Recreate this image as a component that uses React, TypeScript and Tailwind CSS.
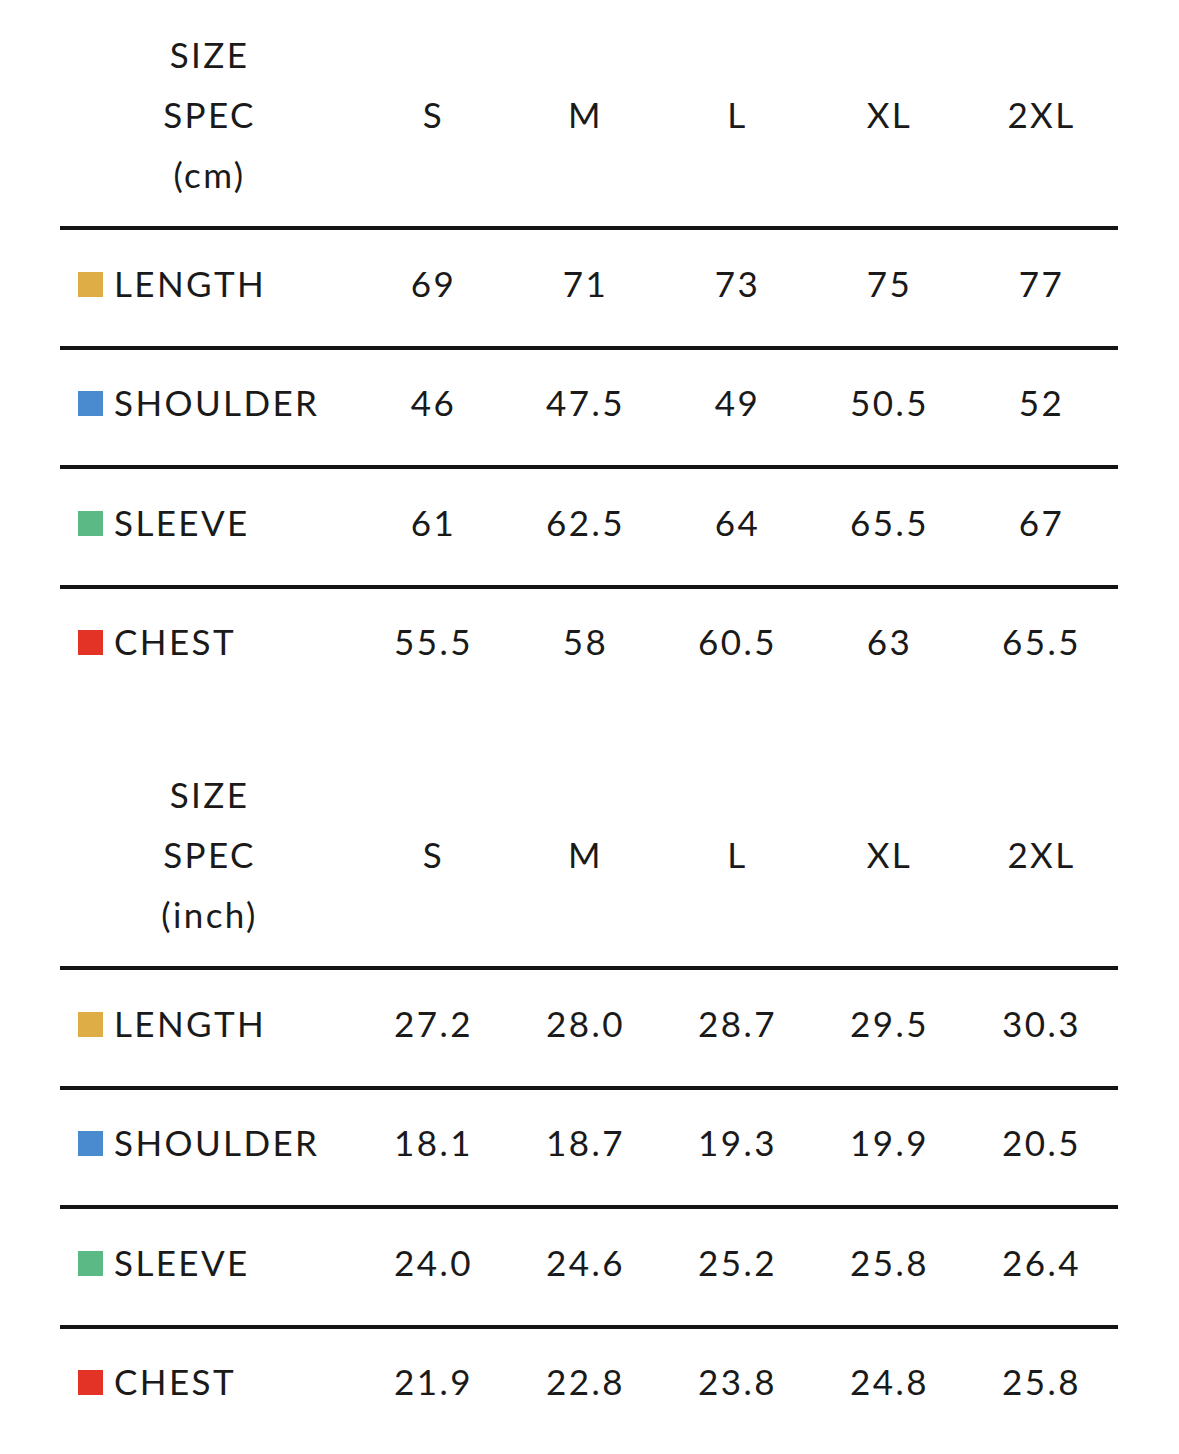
const sizes = ["S", "M", "L", "XL", "2XL"];

type Row = { label: string; color: string; values: string[] };

const cmRows: Row[] = [
  { label: "LENGTH", color: "bg-[#dfad46]", values: ["69", "71", "73", "75", "77"] },
  { label: "SHOULDER", color: "bg-[#4a8acf]", values: ["46", "47.5", "49", "50.5", "52"] },
  { label: "SLEEVE", color: "bg-[#5bb985]", values: ["61", "62.5", "64", "65.5", "67"] },
  { label: "CHEST", color: "bg-[#e33327]", values: ["55.5", "58", "60.5", "63", "65.5"] },
];

const inchRows: Row[] = [
  { label: "LENGTH", color: "bg-[#dfad46]", values: ["27.2", "28.0", "28.7", "29.5", "30.3"] },
  { label: "SHOULDER", color: "bg-[#4a8acf]", values: ["18.1", "18.7", "19.3", "19.9", "20.5"] },
  { label: "SLEEVE", color: "bg-[#5bb985]", values: ["24.0", "24.6", "25.2", "25.8", "26.4"] },
  { label: "CHEST", color: "bg-[#e33327]", values: ["21.9", "22.8", "23.8", "24.8", "25.8"] },
];

function SizeTable({ unit, rows }: { unit: string; rows: Row[] }) {
  return (
    <div className="w-[1058px]">
      {/* header */}
      <div className="flex items-center pt-[24px] pb-[22px]">
        <div className="w-[296px] flex flex-col items-center leading-[60px] pl-[3px]">
          <span>SIZE</span>
          <span>SPEC</span>
          <span>{unit}</span>
        </div>
        {sizes.map((s) => (
          <div key={s} className="w-[152px] text-center leading-[60px] pl-[3px]">
            {s}
          </div>
        ))}
      </div>

      {/* rows */}
      {rows.map((r) => (
        <div key={r.label} className="flex items-center h-[119.5px] pb-[10px] border-t-4 border-[#141414]">
          <div className="w-[296px] flex items-center pl-[18px] gap-[11px]">
            <div className={`w-[25px] h-[25px] mt-[3px] ${r.color}`} />
            <span>{r.label}</span>
          </div>
          {r.values.map((v, i) => (
            <div key={i} className="w-[152px] text-center pl-[3px]">
              {v}
            </div>
          ))}
        </div>
      ))}
    </div>
  );
}

export default function App() {
  return (
    <div className="w-[1179px] h-[1454px] bg-white overflow-hidden pl-[60px] font-['Lato',sans-serif] text-[35px] tracking-[2.4px] text-[#1a1a1a]">
      <SizeTable unit="(cm)" rows={cmRows} />
      <div className="h-[36px]" />
      <SizeTable unit="(inch)" rows={inchRows} />
    </div>
  );
}
